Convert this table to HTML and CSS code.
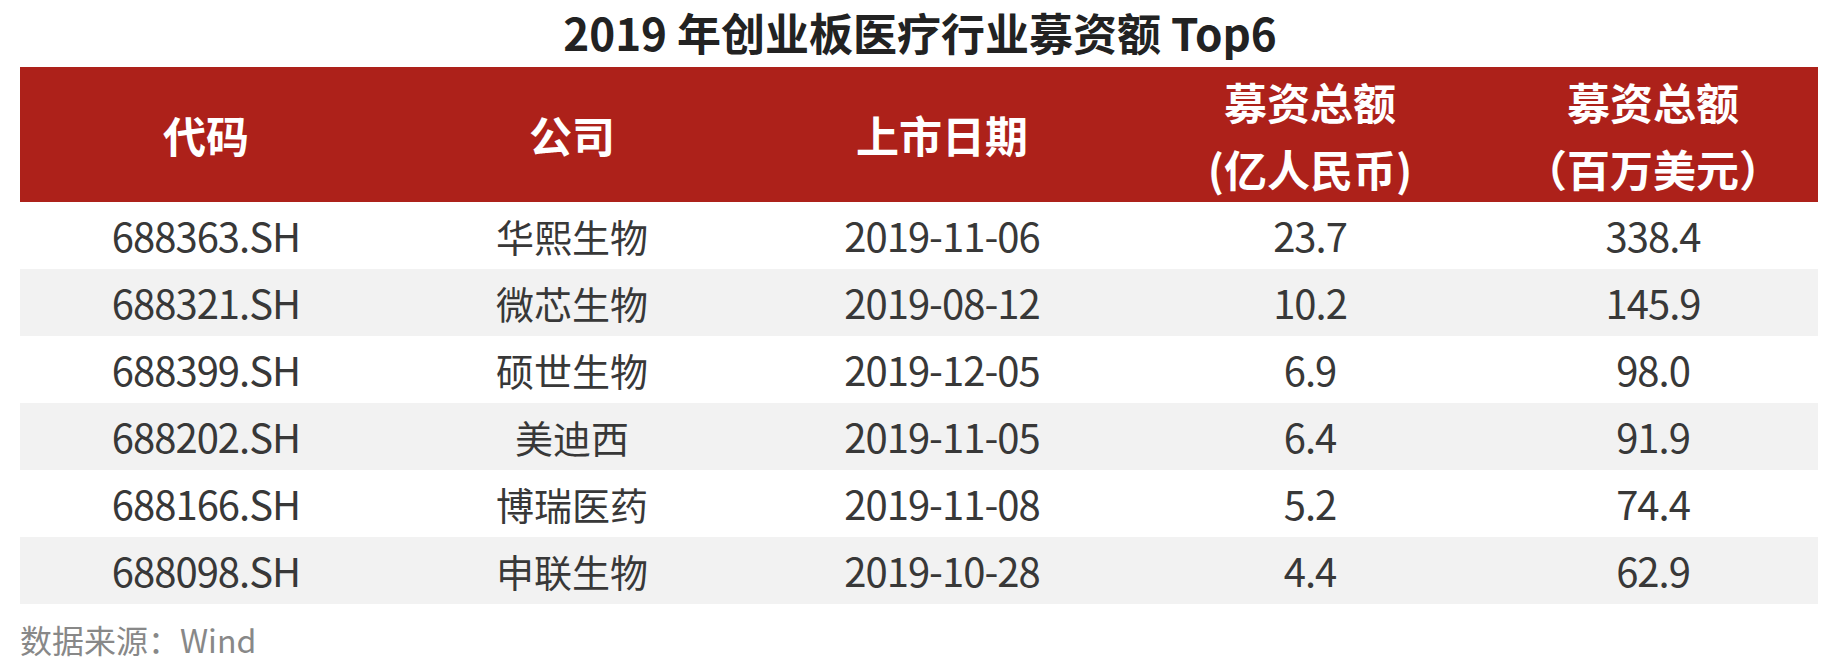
FILE: index.html
```html
<!DOCTYPE html>
<html lang="zh-CN">
<head>
<meta charset="utf-8">
<title>2019 年创业板医疗行业募资额 Top6</title>
<link rel="stylesheet" href="styles.css">
</head>
<body>
<div class="page">
  <h1 class="title">2019 年创业板医疗行业募资额 Top6</h1>
  <table class="data">
    <colgroup>
      <col class="c-code">
      <col class="c-name">
      <col class="c-date">
      <col class="c-cny">
      <col class="c-usd">
    </colgroup>
    <thead>
      <tr>
        <th>代码</th>
        <th>公司</th>
        <th>上市日期</th>
        <th>募资总额<br>(亿人民币)</th>
        <th>募资总额<br>（百万美元）</th>
      </tr>
    </thead>
    <tbody>
      <tr><td>688363.SH</td><td class="cn">华熙生物</td><td>2019-11-06</td><td>23.7</td><td>338.4</td></tr>
      <tr><td>688321.SH</td><td class="cn">微芯生物</td><td>2019-08-12</td><td>10.2</td><td>145.9</td></tr>
      <tr><td>688399.SH</td><td class="cn">硕世生物</td><td>2019-12-05</td><td>6.9</td><td>98.0</td></tr>
      <tr><td>688202.SH</td><td class="cn">美迪西</td><td>2019-11-05</td><td>6.4</td><td>91.9</td></tr>
      <tr><td>688166.SH</td><td class="cn">博瑞医药</td><td>2019-11-08</td><td>5.2</td><td>74.4</td></tr>
      <tr><td>688098.SH</td><td class="cn">申联生物</td><td>2019-10-28</td><td>4.4</td><td>62.9</td></tr>
    </tbody>
  </table>
  <p class="source">数据来源：Wind</p>
</div>
</body>
</html>
```
FILE: styles.css
```css
html, body {
  margin: 0;
  padding: 0;
  background: #ffffff;
}

body {
  font-family: "Noto Sans CJK SC", "Noto Sans", sans-serif;
  color: #3a3a3a;
}

.page {
  width: 1840px;
  height: 662px;
  overflow: hidden;
}

.title {
  margin: 0;
  height: 67px;
  line-height: 64px;
  text-align: center;
  font-size: 44px;
  font-weight: 700;
  color: #222222;
}

.data {
  margin: 0 0 0 20px;
  width: 1798px;
  border-collapse: collapse;
  table-layout: fixed;
}

.c-code { width: 372px; }
.c-name { width: 360px; }
.c-date { width: 380px; }
.c-cny  { width: 356px; }
.c-usd  { width: 330px; }

.data th {
  background: #ad211a;
  color: #ffffff;
  height: 135px;
  padding: 0;
  font-size: 43px;
  font-weight: 700;
  line-height: 67px;
  text-align: center;
  vertical-align: middle;
}

.data td {
  height: 67px;
  padding: 0;
  font-size: 40px;
  font-weight: 400;
  letter-spacing: -1px;
  line-height: 67px;
  text-align: center;
  vertical-align: middle;
  color: #383838;
}

.data td.cn {
  font-size: 38px;
  letter-spacing: 0;
}

.data tbody tr:nth-child(even) td {
  background: #f2f2f2;
}

.source {
  margin: 0;
  padding: 13px 0 0 20px;
  line-height: 44px;
  font-size: 32px;
  color: #888888;
}
```
